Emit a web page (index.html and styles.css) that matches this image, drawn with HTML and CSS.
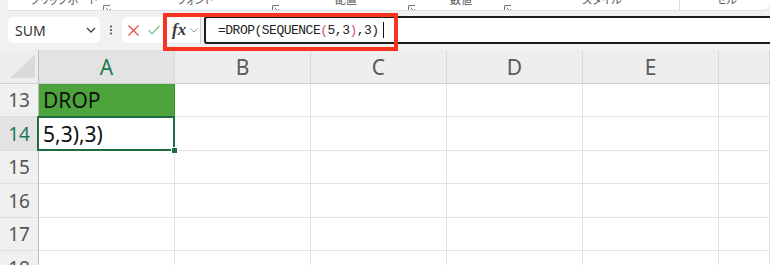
FILE: index.html
```html
<!DOCTYPE html>
<html lang="ja">
<head>
    <meta charset="UTF-8">
    <title>DROP</title>
    <link rel="stylesheet" href="styles.css">
</head>
<body>
    <div class="ribbon">
        <div class="group g-clip"><span class="rb-label">クリップボード</span><span class="launcher"><svg width="8" height="8" viewBox="0 0 8 8"><path d="M0.5 7V0.5H7M2.5 2.5L7 7M4 7H7V4" fill="none" stroke="#777" stroke-width="1"/></svg></span></div>
        <div class="group g-font"><span class="rb-label">フォント</span><span class="launcher"><svg width="8" height="8" viewBox="0 0 8 8"><path d="M0.5 7V0.5H7M2.5 2.5L7 7M4 7H7V4" fill="none" stroke="#777" stroke-width="1"/></svg></span></div>
        <div class="group g-align"><span class="rb-label">配置</span><span class="launcher"><svg width="8" height="8" viewBox="0 0 8 8"><path d="M0.5 7V0.5H7M2.5 2.5L7 7M4 7H7V4" fill="none" stroke="#777" stroke-width="1"/></svg></span></div>
        <div class="group g-num"><span class="rb-label">数値</span><span class="launcher"><svg width="8" height="8" viewBox="0 0 8 8"><path d="M0.5 7V0.5H7M2.5 2.5L7 7M4 7H7V4" fill="none" stroke="#777" stroke-width="1"/></svg></span></div>
        <div class="group g-style"><span class="rb-label">スタイル</span></div>
        <div class="group g-cell"><span class="rb-label">セル</span></div>
    </div>

    <div class="formula-row">
        <div class="namebox">
            <span>SUM</span>
            <svg width="10" height="6" viewBox="0 0 10 6"><path d="M1 1L5 5L9 1" fill="none" stroke="#444" stroke-width="1.3"/></svg>
        </div>
        <div class="dots">
            <svg width="4" height="10" viewBox="0 0 4 10"><circle cx="2" cy="1.5" r="1.1" fill="#555"/><circle cx="2" cy="5" r="1.1" fill="#555"/><circle cx="2" cy="8.5" r="1.1" fill="#555"/></svg>
        </div>
        <div class="fx-tools">
            <svg class="ic-x" width="11" height="11" viewBox="0 0 11 11"><path d="M0.5 0.5L10.5 10.5M10.5 0.5L0.5 10.5" stroke="#e5493e" stroke-width="1.1"/></svg>
            <svg class="ic-ok" width="12" height="10" viewBox="0 0 12 10"><path d="M0.5 5L4 8.8L11.5 0.8" fill="none" stroke="#5bb56a" stroke-width="1.1"/></svg>
            <span class="fx">fx</span>
            <svg class="ic-dd" width="8" height="5" viewBox="0 0 8 5"><path d="M0.5 0.5L4 4L7.5 0.5" fill="none" stroke="#999" stroke-width="1"/></svg>
        </div>
        <div class="formula-input">
            <span class="formula">=DROP(SEQUENCE<span class="paren">(</span>5,3<span class="paren">)</span>,3)</span><span class="caret"></span>
        </div>
    </div>
    <div class="annot"></div>

    <div class="sheet">
        <div class="corner"><div class="tri"></div></div>
        <div class="ch sel-h">A</div>
        <div class="ch">B</div>
        <div class="ch">C</div>
        <div class="ch">D</div>
        <div class="ch">E</div>
        <div class="ch"></div>

        <div class="rh">13</div>
        <div class="c fill">DROP</div>
        <div class="c"></div><div class="c"></div><div class="c"></div><div class="c"></div><div class="c"></div>

        <div class="rh sel-r">14</div>
        <div class="c sel">5,3),3)</div>
        <div class="c"></div><div class="c"></div><div class="c"></div><div class="c"></div><div class="c"></div>

        <div class="rh">15</div>
        <div class="c"></div><div class="c"></div><div class="c"></div><div class="c"></div><div class="c"></div><div class="c"></div>

        <div class="rh">16</div>
        <div class="c"></div><div class="c"></div><div class="c"></div><div class="c"></div><div class="c"></div><div class="c"></div>

        <div class="rh">17</div>
        <div class="c"></div><div class="c"></div><div class="c"></div><div class="c"></div><div class="c"></div><div class="c"></div>

        <div class="rh">18</div>
        <div class="c"></div><div class="c"></div><div class="c"></div><div class="c"></div><div class="c"></div><div class="c"></div>
    </div>
</body>
</html>
```

FILE: styles.css
```css
body {
    margin: 0;
    width: 770px;
    height: 265px;
    overflow: hidden;
    background-color: #f1f1f1;
    font-family: "Noto Sans", "Noto Sans CJK JP", sans-serif;
    color: #333;
    position: relative;
}
.ribbon {
    display: flex;
    height: 10px;
    margin-left: 8px;
    background-color: #fff;
    border-radius: 0 0 7px 0;
    border-bottom: 1px solid #e2e2e2;
    overflow: hidden;
}
.ribbon .group {
    display: flex;
    height: 10px;
    box-sizing: border-box;
}
.ribbon .rb-label {
    font-family: "Noto Sans CJK JP", sans-serif;
    font-feature-settings: "palt";
    font-size: 11px;
    line-height: 11px;
    margin-top: -6px;
    color: #555;
    white-space: nowrap;
}
.ribbon .launcher {
    margin-left: auto;
    margin-top: -4px;
    height: 8px;
}
.g-clip { width: 103px; padding-left: 22px; }
.g-font { width: 169px; padding-left: 66px; }
.g-align { width: 136px; padding-left: 55px; }
.g-num { width: 96px; padding-left: 34px; }
.g-style { width: 168px; padding-left: 70px; border-right: 1px solid #ddd; }
.g-cell { width: 90px; padding-left: 36px; }

.formula-row {
    display: flex;
    align-items: center;
    height: 28px;
    margin-top: 5px;
    padding-left: 8px;
}
.namebox {
    width: 92px;
    height: 26px;
    box-sizing: border-box;
    background-color: #fff;
    border-radius: 5px;
    display: flex;
    align-items: center;
    justify-content: space-between;
    padding: 0 4px 0 7px;
    font-size: 14px;
    color: #333;
}
.dots {
    margin-left: 9px;
    width: 4px;
    height: 10px;
    display: flex;
}
.fx-tools {
    margin-left: 9px;
    width: 79px;
    height: 26px;
    box-sizing: border-box;
    background-color: #fff;
    border-radius: 5px 0 0 5px;
    border-right: 1px solid #cfcfcf;
    display: flex;
    align-items: center;
    padding-left: 6px;
}
.fx-tools .ic-ok {
    margin-left: 9px;
}
.fx-tools .fx {
    margin-left: 12px;
    font-family: "Liberation Serif", serif;
    font-style: italic;
    font-weight: bold;
    font-size: 17px;
    color: #3a3a3a;
    line-height: 1;
    margin-top: -2px;
}
.fx-tools .ic-dd {
    margin-left: 4px;
}
.formula-input {
    margin-left: 3px;
    flex: 1;
    height: 28px;
    box-sizing: border-box;
    background-color: #fff;
    border: 2px solid #1c1c1c;
    border-right: none;
    border-radius: 3px 0 0 3px;
    display: flex;
    align-items: center;
    padding-left: 12px;
}
.formula {
    font-family: "Liberation Mono", monospace;
    font-size: 13px;
    letter-spacing: -0.5px;
    color: #222;
}
.formula .paren {
    color: #d2506e;
}
.caret {
    width: 1px;
    height: 16px;
    margin-left: 4px;
    background-color: #111;
}
.annot {
    position: absolute;
    left: 163px;
    top: 13px;
    width: 235px;
    height: 38px;
    box-sizing: border-box;
    border: 4px solid #f6341f;
}

.sheet {
    margin-top: 6px;
    height: 215px;
    overflow: hidden;
    display: grid;
    grid-template-columns: 39px repeat(5, 136px) 1fr;
    grid-template-rows: 34px 33px 34px 33px 34px 33px 34px;
}
.corner {
    background-color: #eeeeee;
    border-right: 1px solid #bdbdbd;
    border-bottom: 1px solid #cfcfcf;
    display: flex;
    align-items: flex-end;
    justify-content: flex-end;
}
.corner .tri {
    width: 25px;
    height: 24px;
    margin: 0 3px 5px 0;
    background-color: #dadada;
    clip-path: polygon(100% 0, 100% 100%, 0 100%);
}
.ch {
    background-color: #eeeeee;
    border-right: 1px solid #d8d8d8;
    border-bottom: 1px solid #cfcfcf;
    display: flex;
    align-items: center;
    justify-content: center;
    font-size: 21px;
    color: #5a5a5a;
}
.ch.sel-h {
    background-color: #e3e3e3;
    color: #227a55;
}
.rh {
    background-color: #f0f0f0;
    border-right: 1px solid #bdbdbd;
    border-bottom: 1px solid #dedede;
    display: flex;
    align-items: center;
    justify-content: center;
    font-size: 19px;
    color: #555;
}
.rh.sel-r {
    background-color: #e3e3e3;
    color: #227a55;
}
.c {
    background-color: #fff;
    border-right: 1px solid #e1e1e1;
    border-bottom: 1px solid #e1e1e1;
    display: flex;
    align-items: center;
    padding-left: 4px;
    font-size: 21px;
    color: #111;
    white-space: nowrap;
}
.c.fill {
    background-color: #4ea43c;
    border-color: #3f8f31;
}
.c.sel {
    position: relative;
    z-index: 1;
}
.c.sel::after {
    content: '';
    position: absolute;
    left: -2px;
    top: -1px;
    right: -1px;
    bottom: -1px;
    border: 2px solid #1f6c43;
}
.c.sel::before {
    content: '';
    position: absolute;
    right: -4px;
    bottom: -4px;
    width: 5px;
    height: 5px;
    background-color: #1f6c43;
    border: 1px solid #fff;
    z-index: 2;
}
```
